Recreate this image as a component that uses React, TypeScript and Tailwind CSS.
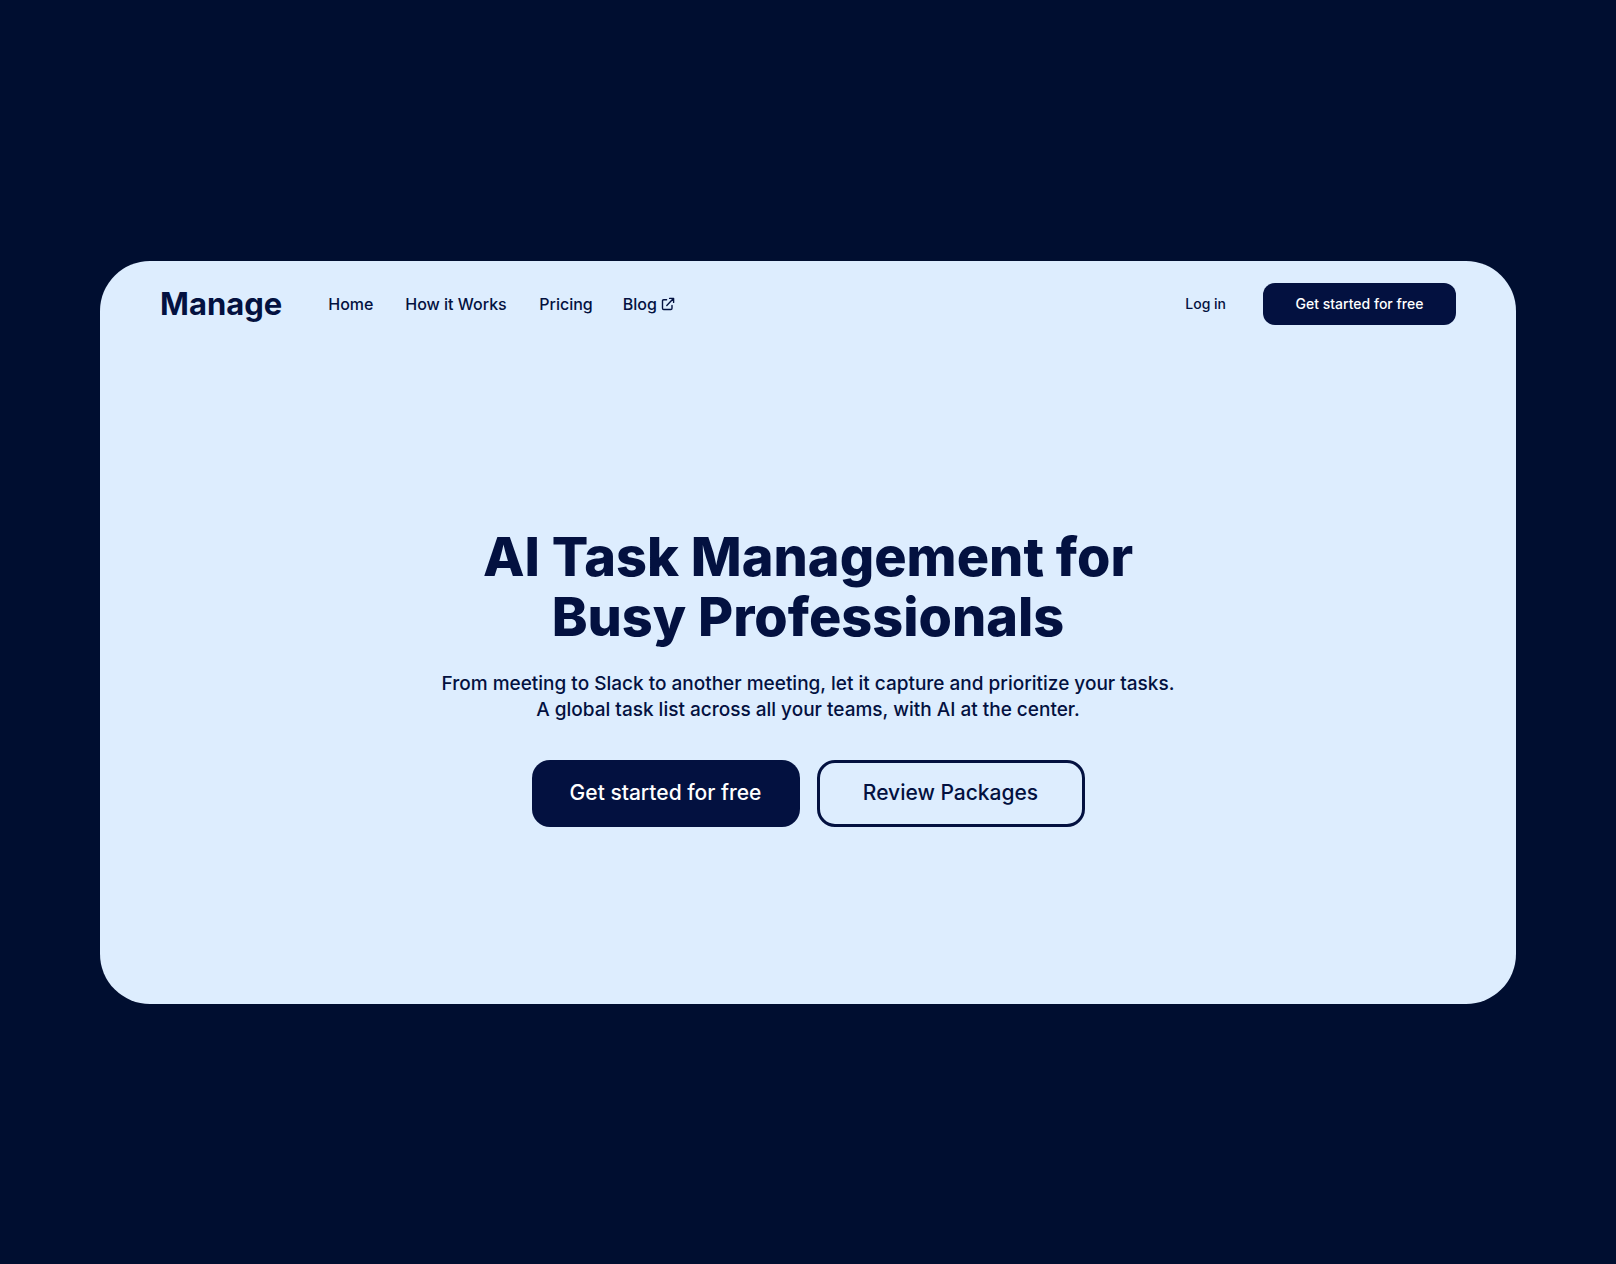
const links = [
  { label: "Home", width: "min-w-[47px]" },
  { label: "How it Works", width: "min-w-[104px]" },
  { label: "Pricing", width: "min-w-[53px]" },
];

function ExternalIcon() {
  return (
    <svg
      viewBox="0 0 14 14"
      className="size-[14px] shrink-0"
      fill="none"
      stroke="currentColor"
      strokeWidth="1.4"
      strokeLinecap="round"
      strokeLinejoin="round"
      aria-hidden="true"
    >
      <path d="M5.6 2.8H2.7Q1.5 2.8 1.5 4V11.3Q1.5 12.5 2.7 12.5H9.8Q11 12.5 11 11.3V8.4" />
      <path d="M5.8 8.4L12.4 1.5M8.6 1.4H12.6V5.4" />
    </svg>
  );
}

export default function App() {
  return (
    <div className="flex min-h-screen items-center bg-[#000e30] px-[100px] font-['Inter',sans-serif] text-[#031140]">
      <div className="min-h-[743px] w-full rounded-[50px] bg-[#ddedfe] px-[60px] pb-20 pt-[22px]">
        <header className="flex items-center justify-between">
          <div className="flex items-center gap-[46px]">
            <a href="#" className="text-[31px] font-bold leading-10">
              Manage
            </a>
            <nav className="flex items-center gap-[30px] whitespace-nowrap text-[16px] font-medium leading-6">
              {links.map((link) => (
                <a key={link.label} href="#" className={link.width}>
                  {link.label}
                </a>
              ))}
              <a href="#" className="flex items-center gap-1">
                Blog
                <ExternalIcon />
              </a>
            </nav>
          </div>
          <div className="flex items-center gap-[37px] whitespace-nowrap text-[14px] font-medium">
            <a href="#">Log in</a>
            <button type="button" className="h-[42px] w-[193px] rounded-xl bg-[#031140] text-white">
              Get started for free
            </button>
          </div>
        </header>
        <main className="flex flex-col items-center pt-[202px] text-center">
          <h1 className="text-[54px] font-extrabold leading-[60px]">
            AI Task Management for
            <br />
            Busy Professionals
          </h1>
          <p className="mt-6 text-[19px] font-medium leading-[26px]">
            From meeting to Slack to another meeting, let it capture and prioritize your tasks.
            <br />A global task list across all your teams, with AI at the center.
          </p>
          <div className="mt-[37px] flex gap-[17px] text-[21px] font-medium">
            <button type="button" className="h-[67px] w-[268px] rounded-[18px] bg-[#031140] text-white">
              Get started for free
            </button>
            <button type="button" className="h-[67px] w-[268px] rounded-[18px] border-3 border-[#031140]">
              Review Packages
            </button>
          </div>
        </main>
      </div>
    </div>
  );
}
